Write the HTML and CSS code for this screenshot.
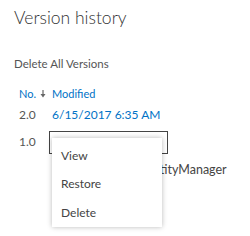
FILE: index.html
```html
<!DOCTYPE html>
<html lang="en">
<head>
  <meta charset="UTF-8" />
  <title>Version history</title>
  <link rel="stylesheet" href="styles.css">
</head>
<body>
  <div class="panel">
    <h1 class="title">Version history</h1>
    <a class="delete-all" href="#">Delete All Versions</a>

    <table class="versions">
      <thead>
        <tr>
          <th class="col-no">No.
            <svg class="sort" width="6" height="8" viewBox="0 0 6 8">
              <path d="M3 0V5" stroke="#666" stroke-width="1.2"/>
              <path d="M0.5 4H5.5L3 7.5Z" fill="#666"/>
            </svg>
          </th>
          <th>Modified</th>
        </tr>
      </thead>
      <tbody>
        <tr>
          <td class="col-no">2.0</td>
          <td><a href="#" class="date">6/15/2017 6:35 AM</a></td>
        </tr>
        <tr>
          <td class="col-no">1.0</td>
          <td>
            <div class="date-box"></div>
            <div class="author">IdentityManager</div>
          </td>
        </tr>
      </tbody>
    </table>

    <ul class="menu">
      <li>View</li>
      <li>Restore</li>
      <li>Delete</li>
    </ul>
  </div>
</body>
</html>
```

FILE: styles.css
```css
* {
  box-sizing: border-box;
  margin: 0;
  padding: 0;
}

body {
  font-family: Lato, "Open Sans", sans-serif;
  background: #fff;
  color: #444;
}

.panel {
  position: relative;
  padding: 6px 14px 0;
  height: 236px;
}

.title {
  font-size: 17.5px;
  font-weight: 300;
  color: #333;
  line-height: 24px;
}

.delete-all {
  display: block;
  margin-top: 27px;
  font-size: 11.5px;
  line-height: 14px;
  color: #555;
  text-decoration: none;
}

.versions {
  border-collapse: collapse;
  margin-top: 16px;
  margin-left: 5px;
}

.versions th {
  font-weight: normal;
  font-size: 11px;
  line-height: 14px;
  color: #0072c6;
  text-align: left;
  padding: 0 0 6px;
}

.versions td {
  font-size: 12px;
  line-height: 16px;
  vertical-align: top;
  padding: 0 0 11px;
}

.col-no {
  width: 33px;
  color: #555;
}

.sort {
  margin-left: 1px;
  vertical-align: 0;
}

.date {
  color: #0072c6;
  text-decoration: none;
  font-size: 12px;
}

.date-box {
  width: 119px;
  height: 23px;
  border: 1px solid #444;
  margin: -3px 0 0 -3px;
}

.author {
  font-size: 12.5px;
  color: #444;
  margin: 8px 0 0 84px;
}

.menu {
  position: absolute;
  left: 52px;
  top: 138px;
  width: 110px;
  list-style: none;
  background: #fff;
  box-shadow: 0 0 5px rgba(0, 0, 0, 0.28);
  padding: 3.5px 0 0;
}

.menu li {
  font-size: 12px;
  color: #444;
  padding: 0 9px;
  line-height: 28.5px;
}
```
